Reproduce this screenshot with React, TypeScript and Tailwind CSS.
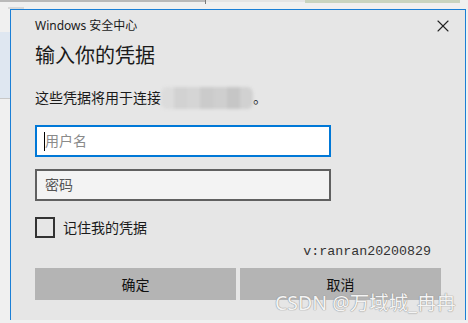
import { X } from 'lucide-react';

const font = { fontFamily: '"Noto Sans", "Noto Sans CJK SC", sans-serif' };

const Blurred = () => (
  <span className="inline-flex h-[22px] w-[92px] overflow-hidden rounded-[6px] align-middle blur-[1.5px]">
    <span className="flex-1 bg-[#dcdcdc]" />
    <span className="flex-1 bg-[#d2d2d2]" />
    <span className="flex-1 bg-[#d5d5d5]" />
    <span className="flex-1 bg-[#cbcbcb]" />
    <span className="flex-1 bg-[#cfcfcf]" />
    <span className="flex-1 bg-[#c6c6c6]" />
    <span className="flex-1 bg-[#d1d1d1]" />
  </span>
);

export default function App() {
  return (
    <div className="relative flex h-[323px] w-[468px] flex-col overflow-hidden bg-[#f0f0f0]" style={font}>
      {/* strip of the window behind */}
      <div className="flex h-[9px] shrink-0">
        <div className="flex w-[205px] flex-col">
          <div className="h-[2px] bg-[#b9b9b9]" />
          <div className="ml-[8px] mt-[5px] h-[2px] w-[16px] bg-[#d8d8d8]" />
        </div>
        <div className="h-[4px] w-[1px] bg-[#7a7a7a]" />
        <div className="h-[2px] w-[99px] bg-[#e4e4e4]" />
        <div className="h-[3px] w-[155px] bg-[#c9d4bf]" />
      </div>

      <div className="flex flex-1">
        <div className="flex w-[10px] shrink-0 flex-col">
          <div className="mt-[23px] h-[66px] bg-[#dfe7f1]" />
          <div className="h-[1px] bg-[#c8c8c8]" />
        </div>

        <div className="flex h-[311px] w-[456px] shrink-0 flex-col border-x border-t border-[#1a7fd6] bg-[#e6e6e6] pl-[24px]">
          <div className="flex h-[32px] items-center justify-between">
            <span className="text-[12px] leading-[16px] text-[#1a1a1a]">Windows 安全中心</span>
            <X className="mr-[12px] h-[20px] w-[20px] text-[#222]" strokeWidth={1.3} />
          </div>

          <div className="h-[28px] text-[20px] leading-[28px] text-[#1a1a1a]">输入你的凭据</div>

          <div className="mt-[18px] flex h-[20px] items-center text-[14px] leading-[20px] text-[#1a1a1a]">
            <span>这些凭据将用于连接</span>
            <Blurred />
            <span>。</span>
          </div>

          <div className="mt-[17px] flex h-[32px] w-[296px] items-center border-2 border-[#0078d7] bg-white pl-[7px]">
            <div className="h-[19px] w-[1px] bg-black" />
            <span className="text-[14px] leading-[20px] text-[#8a8a8a]">用户名</span>
          </div>

          <div className="mt-[12px] flex h-[32px] w-[296px] items-center border-2 border-[#606060] bg-[#f3f3f3] pl-[8px]">
            <span className="text-[14px] leading-[20px] text-[#555]">密码</span>
          </div>

          <div className="mt-[16px] flex h-[21px] items-center gap-[8px]">
            <div className="h-[21px] w-[20px] border-2 border-[#333]" />
            <span className="text-[14px] leading-[20px] text-[#1a1a1a]">记住我的凭据</span>
          </div>

          <div className="mr-[34px] mt-[4px] flex h-[20px] items-center justify-end">
            <span className="text-[13.3px] leading-[20px] text-[#333]" style={{ fontFamily: '"Liberation Mono", monospace' }}>
              v:ranran20200829
            </span>
          </div>

          <div className="mt-[6px] flex gap-[4px]">
            <button className="flex h-[32px] w-[201px] items-center justify-center bg-[#b4b4b4] text-[14px] text-[#111]">确定</button>
            <button className="flex h-[32px] w-[201px] items-center justify-center bg-[#b4b4b4] text-[14px] text-[#111]">取消</button>
          </div>
        </div>
      </div>

      {/* watermark */}
      <div
        className="absolute left-[275px] top-[292px] text-[19.5px] leading-[22px] text-[#f4f4f4]"
        style={{ textShadow: '0 0 1px #8c8c8c, 0 0 1px #8c8c8c' }}
      >
        CSDN @万域城_冉冉
      </div>
    </div>
  );
}
